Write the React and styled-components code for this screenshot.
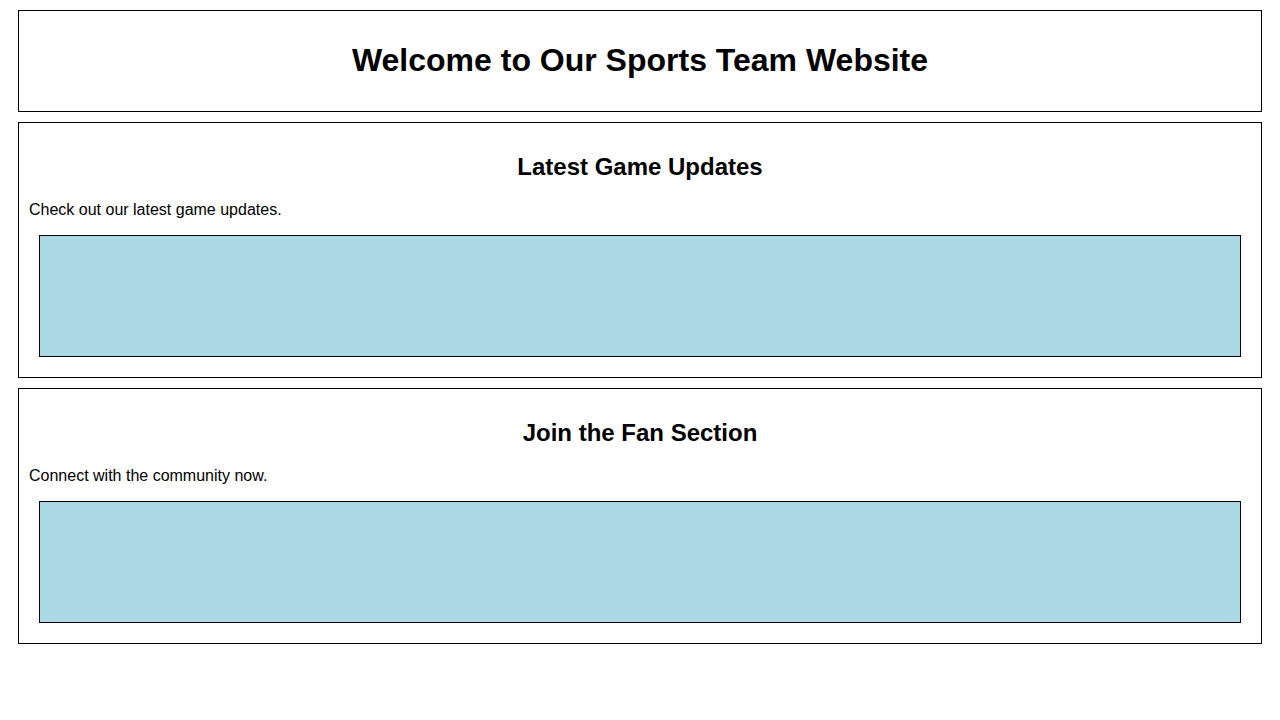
import React from "react";
import styled, { createGlobalStyle } from "styled-components";

const GlobalStyle = createGlobalStyle`
  body {
    margin: 0 8px;
    font-family: "Liberation Sans", Arial, sans-serif;
    background: #ffffff;
    color: #000000;
  }
`;

export const Section = styled.section`
  margin: 10px;
  padding: 10px;
  border: 1px solid #000;
`;

export const Title = styled.h1`
  text-align: center;
  font-size: 2em;
  margin: 0.67em 0;
`;

export const Heading = styled.h2`
  text-align: center;
  font-size: 1.5em;
  margin: 0.83em 0;
`;

export const Text = styled.p`
  margin: 1em 0;
`;

export const Placeholder = styled.div`
  margin: 10px;
  height: 120px;
  background: lightblue;
  border: 1px solid #000;
`;

const sections = [
  { title: "Latest Game Updates", text: "Check out our latest game updates." },
  { title: "Join the Fan Section", text: "Connect with the community now." },
];

const App = () => {
  return (
    <>
      <GlobalStyle />
      <Section>
        <Title>Welcome to Our Sports Team Website</Title>
      </Section>
      {sections.map((s) => (
        <Section key={s.title}>
          <Heading>{s.title}</Heading>
          <Text>{s.text}</Text>
          <Placeholder />
        </Section>
      ))}
    </>
  );
};

export default App;
